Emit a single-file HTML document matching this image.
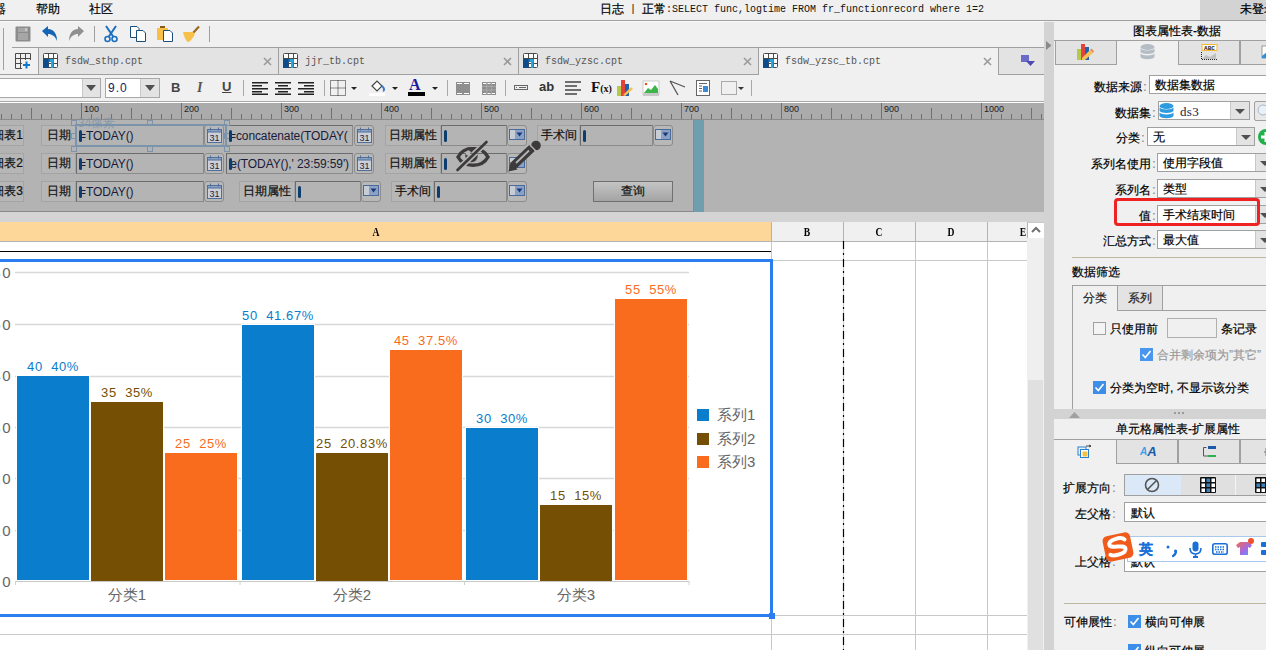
<!DOCTYPE html>
<html><head><meta charset="utf-8">
<style>
*{box-sizing:border-box;margin:0;padding:0}
html,body{width:1266px;height:650px;overflow:hidden;background:#f0f0f0;position:relative;font-family:"Liberation Sans",sans-serif;font-size:12px;color:#000}
.a{position:absolute}
.m{font-family:"Liberation Mono",monospace;font-size:10px}
.hl{position:absolute;height:1px}
.vl{position:absolute;width:1px}
.t12{font-size:12px;line-height:12px;white-space:nowrap}
svg{position:absolute;overflow:visible}
.k{-webkit-text-stroke:0.2px currentColor}
.k .m{-webkit-text-stroke:0}
</style></head><body>
<div class="k a t12" style="left:-6px;top:3px">器</div>
<div class="k a t12" style="left:36px;top:3px">帮助</div>
<div class="k a t12" style="left:89px;top:3px">社区</div>
<div class="k a t12" style="left:600px;top:3px;white-space:pre">日志<span class="m" style="font-size:10px;vertical-align:1px"> | </span>正常<span class="m" style="font-size:10px;vertical-align:1px;color:#111">:SELECT func,logtime FROM fr_functionrecord where 1=2</span></div>
<div class="a" style="left:1200px;top:0;width:66px;height:20px;background:#d3d3d3"></div>
<div class="k a t12" style="left:1240px;top:3px">未登录</div>
<div class="hl" style="left:0;top:20px;width:1266px;background:#a0a0a0"></div>
<div class="hl" style="left:0;top:21px;width:1044px;background:#fbfbfb"></div>
<div class="vl" style="left:3px;top:28px;height:42px;background:#a0a0a0"></div>
<!-- save -->
<svg style="left:15px;top:26px" width="16" height="16"><rect x="0.5" y="0.5" width="15" height="15" rx="1" fill="#8c8c8c"/><rect x="3" y="2" width="10" height="4" fill="#a6a6a6"/><rect x="10" y="2" width="2" height="3" fill="#c8c8c8"/><rect x="3" y="7" width="10" height="7" fill="#a6a6a6"/></svg>
<!-- undo -->
<svg style="left:42px;top:26px" width="16" height="16"><path d="M0 5 L6 0 L6 3 C12 3 15 8 15 15 C13 10 10 8 6 8 L6 11 Z" fill="#1565b5"/></svg>
<!-- redo -->
<svg style="left:69px;top:26px" width="16" height="16"><path d="M15 5 L9 0 L9 3 C3 3 0 8 0 15 C2 10 5 8 9 8 L9 11 Z" fill="#909090"/></svg>
<div class="vl" style="left:94px;top:26px;height:16px;background:#a0a0a0"></div>
<!-- cut -->
<svg style="left:104px;top:26px" width="15" height="16"><path d="M2 0 L9.5 11 M12 0 L4.5 11" stroke="#1a6fc0" stroke-width="2" fill="none"/><circle cx="3.5" cy="13" r="2.5" stroke="#1a6fc0" stroke-width="1.6" fill="none"/><circle cx="10.5" cy="13" r="2.5" stroke="#1a6fc0" stroke-width="1.6" fill="none"/></svg>
<!-- copy -->
<svg style="left:130px;top:26px" width="17" height="16"><path d="M0.5 0.5 H7 L9 2.5 V11.5 H0.5 Z" fill="#fff" stroke="#1b4f7a"/><path d="M6.5 4.5 H13 L15.5 7 V15.5 H6.5 Z" fill="#fff" stroke="#1b4f7a"/></svg>
<!-- paste -->
<svg style="left:157px;top:26px" width="17" height="16"><rect x="0" y="2" width="11" height="12" fill="#f7c04a"/><rect x="3" y="0" width="5" height="2" fill="#8a5a1a"/><path d="M6.5 4.5 H13 L15.5 7 V15.5 H6.5 Z" fill="#fff" stroke="#1b4f7a"/></svg>
<!-- brush -->
<svg style="left:183px;top:26px" width="17" height="16"><path d="M16 0.5 L10 7" stroke="#9a6a20" stroke-width="2.2"/><path d="M10 6 L12 8 C10 12 7 16 5 16 C3 15 1 11 0 6 C4 6 7 6 10 6 Z" fill="#f7c04a"/></svg>
<div class="vl" style="left:209px;top:26px;height:16px;background:#a0a0a0"></div>
<div class="hl" style="left:0;top:74px;width:38px;background:#a0a0a0"></div>
<div class="hl" style="left:12px;top:47px;width:1032px;background:#a0a0a0"></div>
<svg style="left:15px;top:53px" width="16" height="16"><path d="M0.5 0.5H15.5V7M0.5 0.5V15.5H7M5.5 0.5V15.5M10.5 0.5V7M0.5 5.5H15.5M0.5 10.5H7" stroke="#4a4a4a" fill="none"/><path d="M8 12H15M11.5 8.5V15.5" stroke="#0a78d0" stroke-width="2"/></svg>
<div class="vl" style="left:38px;top:47px;height:28px;background:#a0a0a0"></div>
<div class="a" style="left:39px;top:48px;width:239px;height:26px;background:#e3e3e3"></div>
<div class="hl" style="left:38px;top:74px;width:241px;background:#a0a0a0"></div>
<div class="vl" style="left:278px;top:47px;height:28px;background:#a0a0a0"></div>
<svg style="left:43px;top:53px" width="15" height="15"><rect x="0.5" y="0.5" width="14" height="14" rx="1" fill="#fff" stroke="#4a4a4a"/><path d="M5.5 0.5V14.5M10.5 0.5V14.5M0.5 5.5H14.5M0.5 10.5H14.5" stroke="#4a4a4a"/><rect x="0" y="6" width="5.5" height="9" fill="#0b4c8c"/><rect x="5.5" y="6" width="5" height="3" fill="#2aa5de"/><rect x="8" y="6" width="2.5" height="9" fill="#2aa5de"/><rect x="5.5" y="6" width="1" height="3" fill="#0b4c8c"/></svg>
<div class="a m" style="left:65px;top:56px;font-size:10px;line-height:12px;color:#555">fsdw_sthp.cpt</div>
<svg style="left:263px;top:57px" width="9" height="9"><path d="M1 1L8 8M8 1L1 8" stroke="#9a9a9a" stroke-width="1.6"/></svg>
<div class="a" style="left:279px;top:48px;width:239px;height:26px;background:#e3e3e3"></div>
<div class="hl" style="left:278px;top:74px;width:241px;background:#a0a0a0"></div>
<div class="vl" style="left:518px;top:47px;height:28px;background:#a0a0a0"></div>
<svg style="left:283px;top:53px" width="15" height="15"><rect x="0.5" y="0.5" width="14" height="14" rx="1" fill="#fff" stroke="#4a4a4a"/><path d="M5.5 0.5V14.5M10.5 0.5V14.5M0.5 5.5H14.5M0.5 10.5H14.5" stroke="#4a4a4a"/><rect x="0" y="6" width="5.5" height="9" fill="#0b4c8c"/><rect x="5.5" y="6" width="5" height="3" fill="#2aa5de"/><rect x="8" y="6" width="2.5" height="9" fill="#2aa5de"/><rect x="5.5" y="6" width="1" height="3" fill="#0b4c8c"/></svg>
<div class="a m" style="left:305px;top:56px;font-size:10px;line-height:12px;color:#555">jjr_tb.cpt</div>
<svg style="left:503px;top:57px" width="9" height="9"><path d="M1 1L8 8M8 1L1 8" stroke="#9a9a9a" stroke-width="1.6"/></svg>
<div class="a" style="left:519px;top:48px;width:239px;height:26px;background:#e3e3e3"></div>
<div class="hl" style="left:518px;top:74px;width:241px;background:#a0a0a0"></div>
<div class="vl" style="left:758px;top:47px;height:28px;background:#a0a0a0"></div>
<svg style="left:523px;top:53px" width="15" height="15"><rect x="0.5" y="0.5" width="14" height="14" rx="1" fill="#fff" stroke="#4a4a4a"/><path d="M5.5 0.5V14.5M10.5 0.5V14.5M0.5 5.5H14.5M0.5 10.5H14.5" stroke="#4a4a4a"/><rect x="0" y="6" width="5.5" height="9" fill="#0b4c8c"/><rect x="5.5" y="6" width="5" height="3" fill="#2aa5de"/><rect x="8" y="6" width="2.5" height="9" fill="#2aa5de"/><rect x="5.5" y="6" width="1" height="3" fill="#0b4c8c"/></svg>
<div class="a m" style="left:545px;top:56px;font-size:10px;line-height:12px;color:#555">fsdw_yzsc.cpt</div>
<svg style="left:743px;top:57px" width="9" height="9"><path d="M1 1L8 8M8 1L1 8" stroke="#9a9a9a" stroke-width="1.6"/></svg>
<div class="a" style="left:759px;top:48px;width:239px;height:26px;background:#f0f0f0"></div>
<div class="vl" style="left:998px;top:47px;height:28px;background:#a0a0a0"></div>
<svg style="left:763px;top:53px" width="15" height="15"><rect x="0.5" y="0.5" width="14" height="14" rx="1" fill="#fff" stroke="#4a4a4a"/><path d="M5.5 0.5V14.5M10.5 0.5V14.5M0.5 5.5H14.5M0.5 10.5H14.5" stroke="#4a4a4a"/><rect x="0" y="6" width="5.5" height="9" fill="#0b4c8c"/><rect x="5.5" y="6" width="5" height="3" fill="#2aa5de"/><rect x="8" y="6" width="2.5" height="9" fill="#2aa5de"/><rect x="5.5" y="6" width="1" height="3" fill="#0b4c8c"/></svg>
<div class="a m" style="left:785px;top:56px;font-size:10px;line-height:12px;color:#555">fsdw_yzsc_tb.cpt</div>
<svg style="left:983px;top:57px" width="9" height="9"><path d="M1 1L8 8M8 1L1 8" stroke="#9a9a9a" stroke-width="1.6"/></svg>
<div class="a" style="left:999px;top:48px;width:45px;height:26px;background:#e3e3e3"></div>
<div class="hl" style="left:998px;top:74px;width:46px;background:#a0a0a0"></div>
<svg style="left:1021px;top:55px" width="14" height="12"><rect x="0" y="0" width="8" height="7" fill="#6a6ac8"/><path d="M5 6H14L9.5 11Z" fill="#4a4ab0"/></svg><!-- font combo -->
<div class="a" style="left:-1px;top:78px;width:102px;height:20px;background:#fff;border:1px solid #a8a8a8"></div>
<div class="a" style="left:82px;top:79px;width:18px;height:18px;background:#e3e3e3;border-left:1px solid #c8c8c8"></div>
<svg style="left:86px;top:85px" width="10" height="6"><path d="M0 0H10L5 6Z" fill="#505050"/></svg>
<div class="a" style="left:105px;top:78px;width:55px;height:20px;background:#fff;border:1px solid #a8a8a8"></div>
<div class="a" style="left:140px;top:79px;width:19px;height:18px;background:#e3e3e3;border-left:1px solid #c8c8c8"></div>
<svg style="left:145px;top:85px" width="10" height="6"><path d="M0 0H10L5 6Z" fill="#505050"/></svg>
<div class="a" style="left:108px;top:82px;font-size:12px;line-height:12px;color:#1a1a60;letter-spacing:1px">9.0</div>
<!-- B I U -->
<div class="a" style="left:171px;top:81px;font-size:13px;line-height:14px;font-weight:bold;color:#444">B</div>
<div class="a" style="left:197px;top:81px;font-size:14px;line-height:14px;font-style:italic;font-weight:bold;color:#555;font-family:'Liberation Serif',serif">I</div>
<div class="a" style="left:222px;top:80px;font-size:13px;line-height:14px;font-weight:bold;text-decoration:underline;color:#444">U</div>
<div class="vl" style="left:243px;top:80px;height:16px;background:#a8a8a8"></div>
<svg style="left:252px;top:82px" width="17" height="13"><path d="M0 0.75H16M0 3.75H10M0 6.75H16M0 9.75H10M0 12.25H16" stroke="#222" stroke-width="1.3"/></svg>
<svg style="left:275px;top:82px" width="17" height="13"><path d="M0 0.75H16M3 3.75H13M0 6.75H16M3 9.75H13M0 12.25H16" stroke="#222" stroke-width="1.3"/></svg>
<svg style="left:298px;top:82px" width="17" height="13"><path d="M0 0.75H16M6 3.75H16M0 6.75H16M6 9.75H16M0 12.25H16" stroke="#222" stroke-width="1.3"/></svg>
<div class="vl" style="left:324px;top:80px;height:16px;background:#a8a8a8"></div>
<svg style="left:330px;top:80px" width="16" height="16"><rect x="0.5" y="0.5" width="15" height="15" fill="none" stroke="#222" stroke-dasharray="1 1"/><path d="M8 0.5V15.5M0.5 8H15.5" stroke="#222" stroke-dasharray="1 1"/></svg>
<svg style="left:351px;top:87px" width="6" height="3"><path d="M0 0H6L3 3Z" fill="#222"/></svg>
<svg style="left:369px;top:80px" width="17" height="16"><path d="M3 6L8 1L13 6L8 11Z" fill="#fff" stroke="#444" stroke-width="1.2"/><path d="M13 6C15 8 16 10 14 11" stroke="#3a7ac8" stroke-width="2" fill="none"/><rect x="0" y="13" width="16" height="3" fill="#fff"/></svg>
<svg style="left:392px;top:87px" width="6" height="3"><path d="M0 0H6L3 3Z" fill="#222"/></svg>
<div class="a" style="left:409px;top:77px;font-family:'Liberation Serif',serif;font-size:16px;line-height:16px;font-weight:bold;color:#1a1a9a">A</div>
<div class="a" style="left:408px;top:92px;width:17px;height:4px;background:#000"></div>
<svg style="left:432px;top:87px" width="6" height="3"><path d="M0 0H6L3 3Z" fill="#222"/></svg>
<div class="vl" style="left:447px;top:80px;height:16px;background:#a8a8a8"></div>
<!-- merge -->
<svg style="left:456px;top:82px" width="14" height="13"><rect x="0" y="0" width="14" height="13" fill="#8e8e8e"/><path d="M1 1.5H6M8 1.5H13M1 11.5H6M8 11.5H13" stroke="#fff" stroke-width="1"/></svg>
<svg style="left:482px;top:82px" width="14" height="13"><rect x="0" y="0" width="14" height="13" fill="#8e8e8e"/><path d="M1 1.5H4M5.5 1.5H8.5M10 1.5H13M1 11.5H4M5.5 11.5H8.5M10 11.5H13" stroke="#fff"/><path d="M0 4.5H14M0 8H14M4.7 0V13M9.3 0V13" stroke="#a8a8a8"/></svg>
<div class="vl" style="left:505px;top:80px;height:16px;background:#a8a8a8"></div>
<svg style="left:514px;top:85px" width="14" height="5"><rect x="0.5" y="0.5" width="13" height="4" fill="none" stroke="#666"/><rect x="5" y="2" width="7" height="1" fill="#666"/><rect x="2" y="2" width="1" height="1" fill="#666"/></svg>
<div class="a" style="left:539px;top:80px;font-size:13px;line-height:13px;font-weight:bold;color:#333">ab</div>
<svg style="left:565px;top:81px" width="17" height="15"><path d="M0 1H16M0 5H12M0 9H16M0 13H12" stroke="#444" stroke-width="1.6"/></svg>
<div class="a" style="left:591px;top:80px;font-family:'Liberation Serif',serif;font-size:15px;line-height:15px;font-weight:bold;color:#111">F<span style="font-size:10px">(x)</span></div>
<!-- chart icon -->
<svg style="left:617px;top:80px" width="17" height="16"><rect x="0" y="6" width="4" height="10" fill="#b5c94a"/><rect x="4" y="0" width="4" height="16" fill="#e5433a"/><rect x="8" y="4" width="4" height="12" fill="#1a64b0"/><path d="M6 15L14 7L16 9L8 16Z" fill="#f5c25a"/></svg>
<svg style="left:643px;top:81px" width="16" height="15"><rect x="0" y="0" width="16" height="13" fill="#fff" stroke="#ccc"/><path d="M1 12L5 7L8 9L12 4L15 8V12Z" fill="#3cb54a"/><rect x="0" y="12" width="16" height="3" fill="#c8c8c8"/><circle cx="3" cy="3" r="1.3" fill="#e8552a"/></svg>
<svg style="left:669px;top:80px" width="17" height="16"><path d="M1 1L16 7M1 1L9 15" stroke="#555" stroke-width="1.3" fill="none"/></svg>
<svg style="left:696px;top:80px" width="14" height="16"><rect x="0.5" y="0.5" width="13" height="15" fill="#fff" stroke="#666"/><path d="M3 3.5H11M3 6H6M3 8.5H6M3 11H6" stroke="#666"/><rect x="7" y="6" width="5" height="6" fill="#3a8ad8"/></svg>
<svg style="left:720px;top:80px" width="18" height="16"><rect x="1.5" y="1.5" width="15" height="13" fill="none" stroke="#aaa"/></svg>
<svg style="left:738px;top:87px" width="6" height="3"><path d="M0 0H6L3 3Z" fill="#333"/></svg>
<div class="vl" style="left:751px;top:80px;height:16px;background:#a8a8a8"></div>
<div class="hl" style="left:0;top:101px;width:1044px;background:#a8a8a8"></div>
<div class="hl" style="left:0;top:102px;width:1044px;background:#fff"></div>
<div class="a" style="left:0;top:103px;width:1044px;height:17px;background:#ababab"></div>
<div class="hl" style="left:0;top:119px;width:1044px;background:#8a8a8a"></div>
<svg style="left:0;top:0" width="1044" height="120"><path d="M1.5 114V119M11.5 114V119M21.5 114V119M31.5 108V119M41.5 114V119M51.5 114V119M61.5 114V119M71.5 114V119M81.5 103V119M91.5 114V119M101.5 114V119M111.5 114V119M121.5 114V119M131.5 108V119M141.5 114V119M151.5 114V119M161.5 114V119M171.5 114V119M181.5 103V119M191.5 114V119M201.5 114V119M211.5 114V119M221.5 114V119M231.5 108V119M241.5 114V119M251.5 114V119M261.5 114V119M271.5 114V119M281.5 103V119M291.5 114V119M301.5 114V119M311.5 114V119M321.5 114V119M331.5 108V119M341.5 114V119M351.5 114V119M361.5 114V119M371.5 114V119M381.5 103V119M391.5 114V119M401.5 114V119M411.5 114V119M421.5 114V119M431.5 108V119M441.5 114V119M451.5 114V119M461.5 114V119M471.5 114V119M481.5 103V119M491.5 114V119M501.5 114V119M511.5 114V119M521.5 114V119M531.5 108V119M541.5 114V119M551.5 114V119M561.5 114V119M571.5 114V119M581.5 103V119M591.5 114V119M601.5 114V119M611.5 114V119M621.5 114V119M631.5 108V119M641.5 114V119M651.5 114V119M661.5 114V119M671.5 114V119M681.5 103V119M691.5 114V119M701.5 114V119M711.5 114V119M721.5 114V119M731.5 108V119M741.5 114V119M751.5 114V119M761.5 114V119M771.5 114V119M781.5 103V119M791.5 114V119M801.5 114V119M811.5 114V119M821.5 114V119M831.5 108V119M841.5 114V119M851.5 114V119M861.5 114V119M871.5 114V119M881.5 103V119M891.5 114V119M901.5 114V119M911.5 114V119M921.5 114V119M931.5 108V119M941.5 114V119M951.5 114V119M961.5 114V119M971.5 114V119M981.5 103V119M991.5 114V119M1001.5 114V119M1011.5 114V119M1021.5 114V119M1031.5 108V119M1041.5 114V119" stroke="#707070" stroke-width="1"/></svg>
<div class="a" style="left:84px;top:105px;font-size:9px;line-height:9px;color:#222">100</div>
<div class="a" style="left:184px;top:105px;font-size:9px;line-height:9px;color:#222">200</div>
<div class="a" style="left:284px;top:105px;font-size:9px;line-height:9px;color:#222">300</div>
<div class="a" style="left:384px;top:105px;font-size:9px;line-height:9px;color:#222">400</div>
<div class="a" style="left:484px;top:105px;font-size:9px;line-height:9px;color:#222">500</div>
<div class="a" style="left:584px;top:105px;font-size:9px;line-height:9px;color:#222">600</div>
<div class="a" style="left:684px;top:105px;font-size:9px;line-height:9px;color:#222">700</div>
<div class="a" style="left:784px;top:105px;font-size:9px;line-height:9px;color:#222">800</div>
<div class="a" style="left:884px;top:105px;font-size:9px;line-height:9px;color:#222">900</div>
<div class="a" style="left:984px;top:105px;font-size:9px;line-height:9px;color:#222">1000</div><div class="a" style="left:0;top:120px;width:1044px;height:92px;background:#b3b3b3"></div>
<div class="a" style="left:0;top:212px;width:1054px;height:10px;background:#d4d4d4"></div>
<div class="k a" style="left:-12px;top:125px;width:36px;height:21px;border:1px solid #a4a4a4;background:#b6b6b6;font-size:12px;line-height:18px;text-align:right;white-space:nowrap;overflow:hidden;color:#111">细表1</div>
<div class="k a" style="left:41px;top:125px;width:35px;height:21px;border:1px solid #a4a4a4;background:#b6b6b6;font-size:12px;line-height:18px;text-align:center;white-space:nowrap;overflow:hidden;color:#111">日期</div>
<div class="a" style="left:76px;top:125px;width:128px;height:21px;border:1px solid #6c6c6c;border-right-color:#8a8a8a;border-bottom-color:#8a8a8a;background:#b4b4b4"></div><div class="a" style="left:79px;top:130px;width:3px;height:12px;background:#0d3d6e;border-radius:1.5px;z-index:2"></div><div class="a" style="left:79px;top:127px;width:123px;height:18px;font-size:12px;line-height:18px;white-space:nowrap;overflow:hidden;color:#1a1a3a;letter-spacing:-0.1px">=TODAY()</div>
<div class="a" style="left:204px;top:125px;width:20px;height:21px;border:1px solid #8c8c8c;border-radius:3px;background:#b8b8b8"></div><svg style="left:207px;top:127px" width="15" height="16"><rect x="0.5" y="2.5" width="14" height="13" fill="#cdd0d6" stroke="#4f6e9a"/><rect x="0.5" y="2.5" width="14" height="2.5" fill="#8ca2c2" stroke="#4f6e9a"/><path d="M3.5 0.5V3.5M11.5 0.5V3.5" stroke="#4f6e9a"/><text x="7.5" y="14" font-size="9" font-family="Liberation Sans" text-anchor="middle" fill="#1a2440">31</text></svg>
<div class="k a" style="left:-12px;top:153px;width:36px;height:21px;border:1px solid #a4a4a4;background:#b6b6b6;font-size:12px;line-height:18px;text-align:right;white-space:nowrap;overflow:hidden;color:#111">细表2</div>
<div class="k a" style="left:41px;top:153px;width:35px;height:21px;border:1px solid #a4a4a4;background:#b6b6b6;font-size:12px;line-height:18px;text-align:center;white-space:nowrap;overflow:hidden;color:#111">日期</div>
<div class="a" style="left:76px;top:153px;width:128px;height:21px;border:1px solid #6c6c6c;border-right-color:#8a8a8a;border-bottom-color:#8a8a8a;background:#b4b4b4"></div><div class="a" style="left:79px;top:158px;width:3px;height:12px;background:#0d3d6e;border-radius:1.5px;z-index:2"></div><div class="a" style="left:79px;top:155px;width:123px;height:18px;font-size:12px;line-height:18px;white-space:nowrap;overflow:hidden;color:#1a1a3a;letter-spacing:-0.1px">=TODAY()</div>
<div class="a" style="left:204px;top:153px;width:20px;height:21px;border:1px solid #8c8c8c;border-radius:3px;background:#b8b8b8"></div><svg style="left:207px;top:155px" width="15" height="16"><rect x="0.5" y="2.5" width="14" height="13" fill="#cdd0d6" stroke="#4f6e9a"/><rect x="0.5" y="2.5" width="14" height="2.5" fill="#8ca2c2" stroke="#4f6e9a"/><path d="M3.5 0.5V3.5M11.5 0.5V3.5" stroke="#4f6e9a"/><text x="7.5" y="14" font-size="9" font-family="Liberation Sans" text-anchor="middle" fill="#1a2440">31</text></svg>
<div class="k a" style="left:-12px;top:181px;width:36px;height:21px;border:1px solid #a4a4a4;background:#b6b6b6;font-size:12px;line-height:18px;text-align:right;white-space:nowrap;overflow:hidden;color:#111">细表3</div>
<div class="k a" style="left:41px;top:181px;width:35px;height:21px;border:1px solid #a4a4a4;background:#b6b6b6;font-size:12px;line-height:18px;text-align:center;white-space:nowrap;overflow:hidden;color:#111">日期</div>
<div class="a" style="left:76px;top:181px;width:128px;height:21px;border:1px solid #6c6c6c;border-right-color:#8a8a8a;border-bottom-color:#8a8a8a;background:#b4b4b4"></div><div class="a" style="left:79px;top:186px;width:3px;height:12px;background:#0d3d6e;border-radius:1.5px;z-index:2"></div><div class="a" style="left:79px;top:183px;width:123px;height:18px;font-size:12px;line-height:18px;white-space:nowrap;overflow:hidden;color:#1a1a3a;letter-spacing:-0.1px">=TODAY()</div>
<div class="a" style="left:204px;top:181px;width:20px;height:21px;border:1px solid #8c8c8c;border-radius:3px;background:#b8b8b8"></div><svg style="left:207px;top:183px" width="15" height="16"><rect x="0.5" y="2.5" width="14" height="13" fill="#cdd0d6" stroke="#4f6e9a"/><rect x="0.5" y="2.5" width="14" height="2.5" fill="#8ca2c2" stroke="#4f6e9a"/><path d="M3.5 0.5V3.5M11.5 0.5V3.5" stroke="#4f6e9a"/><text x="7.5" y="14" font-size="9" font-family="Liberation Sans" text-anchor="middle" fill="#1a2440">31</text></svg>
<div class="a" style="left:226px;top:125px;width:127px;height:21px;border:1px solid #6c6c6c;border-right-color:#8a8a8a;border-bottom-color:#8a8a8a;background:#b4b4b4"></div><div class="a" style="left:229px;top:130px;width:3px;height:12px;background:#0d3d6e;border-radius:1.5px;z-index:2"></div><div class="a" style="left:229px;top:127px;width:122px;height:18px;font-size:12px;line-height:18px;white-space:nowrap;overflow:hidden;color:#1a1a3a;letter-spacing:-0.1px">=concatenate(TODAY(</div>
<div class="a" style="left:354px;top:125px;width:20px;height:21px;border:1px solid #8c8c8c;border-radius:3px;background:#b8b8b8"></div><svg style="left:357px;top:127px" width="15" height="16"><rect x="0.5" y="2.5" width="14" height="13" fill="#cdd0d6" stroke="#4f6e9a"/><rect x="0.5" y="2.5" width="14" height="2.5" fill="#8ca2c2" stroke="#4f6e9a"/><path d="M3.5 0.5V3.5M11.5 0.5V3.5" stroke="#4f6e9a"/><text x="7.5" y="14" font-size="9" font-family="Liberation Sans" text-anchor="middle" fill="#1a2440">31</text></svg>
<div class="k a" style="left:385px;top:125px;width:56px;height:21px;border:1px solid #a4a4a4;background:#b6b6b6;font-size:12px;line-height:18px;text-align:center;white-space:nowrap;overflow:hidden;color:#111">日期属性</div>
<div class="a" style="left:441px;top:125px;width:66px;height:21px;border:1px solid #6c6c6c;border-right-color:#8a8a8a;border-bottom-color:#8a8a8a;background:#b4b4b4"></div><div class="a" style="left:444px;top:130px;width:3px;height:12px;background:#0d3d6e;border-radius:1.5px;z-index:2"></div>
<div class="a" style="left:507px;top:125px;width:20px;height:21px;border:1px solid #8c8c8c;border-radius:3px;background:#b8b8b8"></div><svg style="left:509px;top:129px" width="16" height="11"><rect x="0.5" y="0.5" width="15" height="10" fill="#c8ccd4" stroke="#4a6a9a"/><rect x="6" y="1" width="9" height="9" fill="#8aa0c4"/><path d="M7.5 3.5H13.5L10.5 7.5Z" fill="#1a3a7a"/></svg>
<div class="k a" style="left:537px;top:125px;width:43px;height:21px;border:1px solid #a4a4a4;background:#b6b6b6;font-size:12px;line-height:18px;text-align:center;white-space:nowrap;overflow:hidden;color:#111">手术间</div>
<div class="a" style="left:580px;top:125px;width:73px;height:21px;border:1px solid #6c6c6c;border-right-color:#8a8a8a;border-bottom-color:#8a8a8a;background:#b4b4b4"></div><div class="a" style="left:583px;top:130px;width:3px;height:12px;background:#0d3d6e;border-radius:1.5px;z-index:2"></div>
<div class="a" style="left:653px;top:125px;width:20px;height:21px;border:1px solid #8c8c8c;border-radius:3px;background:#b8b8b8"></div><svg style="left:655px;top:129px" width="16" height="11"><rect x="0.5" y="0.5" width="15" height="10" fill="#c8ccd4" stroke="#4a6a9a"/><rect x="6" y="1" width="9" height="9" fill="#8aa0c4"/><path d="M7.5 3.5H13.5L10.5 7.5Z" fill="#1a3a7a"/></svg>
<div class="a" style="left:226px;top:153px;width:127px;height:21px;border:1px solid #6c6c6c;border-right-color:#8a8a8a;border-bottom-color:#8a8a8a;background:#b4b4b4"></div><div class="a" style="left:229px;top:158px;width:3px;height:12px;background:#0d3d6e;border-radius:1.5px;z-index:2"></div><div class="a" style="left:229px;top:155px;width:120px;height:18px;font-size:12px;line-height:18px;white-space:nowrap;overflow:hidden;color:#1a1a3a;letter-spacing:-0.1px;direction:rtl;text-align:right"><span style="direction:ltr;unicode-bidi:bidi-override">te(TODAY(),' 23:59:59')</span></div>
<div class="a" style="left:354px;top:153px;width:20px;height:21px;border:1px solid #8c8c8c;border-radius:3px;background:#b8b8b8"></div><svg style="left:357px;top:155px" width="15" height="16"><rect x="0.5" y="2.5" width="14" height="13" fill="#cdd0d6" stroke="#4f6e9a"/><rect x="0.5" y="2.5" width="14" height="2.5" fill="#8ca2c2" stroke="#4f6e9a"/><path d="M3.5 0.5V3.5M11.5 0.5V3.5" stroke="#4f6e9a"/><text x="7.5" y="14" font-size="9" font-family="Liberation Sans" text-anchor="middle" fill="#1a2440">31</text></svg>
<div class="k a" style="left:385px;top:153px;width:56px;height:21px;border:1px solid #a4a4a4;background:#b6b6b6;font-size:12px;line-height:18px;text-align:center;white-space:nowrap;overflow:hidden;color:#111">日期属性</div>
<div class="a" style="left:441px;top:153px;width:66px;height:21px;border:1px solid #6c6c6c;border-right-color:#8a8a8a;border-bottom-color:#8a8a8a;background:#b4b4b4"></div><div class="a" style="left:444px;top:158px;width:3px;height:12px;background:#0d3d6e;border-radius:1.5px;z-index:2"></div>
<div class="a" style="left:507px;top:153px;width:20px;height:21px;border:1px solid #8c8c8c;border-radius:3px;background:#b8b8b8"></div><svg style="left:509px;top:157px" width="16" height="11"><rect x="0.5" y="0.5" width="15" height="10" fill="#c8ccd4" stroke="#4a6a9a"/><rect x="6" y="1" width="9" height="9" fill="#8aa0c4"/><path d="M7.5 3.5H13.5L10.5 7.5Z" fill="#1a3a7a"/></svg>
<div class="k a" style="left:239px;top:181px;width:56px;height:21px;border:1px solid #a4a4a4;background:#b6b6b6;font-size:12px;line-height:18px;text-align:center;white-space:nowrap;overflow:hidden;color:#111">日期属性</div>
<div class="a" style="left:295px;top:181px;width:66px;height:21px;border:1px solid #6c6c6c;border-right-color:#8a8a8a;border-bottom-color:#8a8a8a;background:#b4b4b4"></div><div class="a" style="left:298px;top:186px;width:3px;height:12px;background:#0d3d6e;border-radius:1.5px;z-index:2"></div>
<div class="a" style="left:361px;top:181px;width:20px;height:21px;border:1px solid #8c8c8c;border-radius:3px;background:#b8b8b8"></div><svg style="left:363px;top:185px" width="16" height="11"><rect x="0.5" y="0.5" width="15" height="10" fill="#c8ccd4" stroke="#4a6a9a"/><rect x="6" y="1" width="9" height="9" fill="#8aa0c4"/><path d="M7.5 3.5H13.5L10.5 7.5Z" fill="#1a3a7a"/></svg>
<div class="k a" style="left:391px;top:181px;width:43px;height:21px;border:1px solid #a4a4a4;background:#b6b6b6;font-size:12px;line-height:18px;text-align:center;white-space:nowrap;overflow:hidden;color:#111">手术间</div>
<div class="a" style="left:434px;top:181px;width:73px;height:21px;border:1px solid #6c6c6c;border-right-color:#8a8a8a;border-bottom-color:#8a8a8a;background:#b4b4b4"></div><div class="a" style="left:437px;top:186px;width:3px;height:12px;background:#0d3d6e;border-radius:1.5px;z-index:2"></div>
<div class="a" style="left:507px;top:181px;width:20px;height:21px;border:1px solid #8c8c8c;border-radius:3px;background:#b8b8b8"></div><svg style="left:509px;top:185px" width="16" height="11"><rect x="0.5" y="0.5" width="15" height="10" fill="#c8ccd4" stroke="#4a6a9a"/><rect x="6" y="1" width="9" height="9" fill="#8aa0c4"/><path d="M7.5 3.5H13.5L10.5 7.5Z" fill="#1a3a7a"/></svg>
<div class="k a" style="left:593px;top:181px;width:80px;height:21px;border:1px solid #707070;background:linear-gradient(#c4c4c4,#a4a4a4);font-size:12px;line-height:19px;text-align:center;color:#111">查询</div>
<div class="a" style="left:694px;top:120px;width:10px;height:92px;background:#6f9fae"></div>
<div class="a" style="left:75px;top:124px;width:152px;height:23px;border:2px solid #7b93ab"></div>
<div class="k a" style="left:78px;top:117px;font-size:12px;line-height:12px;color:#7890a8;opacity:.7;-webkit-text-stroke:0">34像素</div>
<svg style="left:456px;top:141px" width="34" height="31"><defs><mask id="em"><rect x="-5" y="-5" width="50" height="50" fill="#fff"/><path d="M1.5 29L30.5 1" stroke="#000" stroke-width="6"/></mask></defs><g mask="url(#em)"><path d="M2 16C8 4.5 26 4.5 32 16C26 27 8 27 2 16Z" fill="none" stroke="#3c3a3a" stroke-width="3.4"/><circle cx="15.5" cy="15" r="6.2" fill="#3c3a3a"/><circle cx="12.3" cy="12" r="2.6" fill="#b6b6b6"/></g><path d="M1.5 29L30.5 1" stroke="#3c3a3a" stroke-width="2.6" stroke-linecap="round"/></svg>
<svg style="left:508px;top:141px" width="33" height="32"><path d="M5 25L24 7" stroke="#3c3a3a" stroke-width="8"/><path d="M0.5 30.5L2.5 21.5L9.5 28.5Z" fill="#3c3a3a"/><circle cx="28" cy="4.5" r="4.8" fill="#3c3a3a"/><path d="M8 22L21 9.5" stroke="#b4b4b4" stroke-width="1.8"/><path d="M22 4L28.5 10.5" stroke="#b4b4b4" stroke-width="1.2"/></svg>
<div class="vl" style="left:693px;top:120px;height:92px;background:#8a8a8a"></div>
<div class="hl" style="left:0;top:211px;width:694px;background:#8a8a8a"></div>
<div class="vl" style="left:704px;top:120px;height:92px;background:#bab2b2"></div>

<div class="a" style="left:71px;top:120px;width:6px;height:6px;border:1px solid #7b93ab"></div>
<div class="a" style="left:71px;top:146px;width:6px;height:6px;border:1px solid #7b93ab"></div>
<div class="a" style="left:147px;top:120px;width:6px;height:6px;border:1px solid #7b93ab"></div>
<div class="a" style="left:147px;top:146px;width:6px;height:6px;border:1px solid #7b93ab"></div>
<div class="a" style="left:224px;top:120px;width:6px;height:6px;border:1px solid #7b93ab"></div>
<div class="a" style="left:224px;top:146px;width:6px;height:6px;border:1px solid #7b93ab"></div>
<div class="a" style="left:71px;top:133px;width:6px;height:6px;border:1px solid #7b93ab"></div>
<div class="a" style="left:224px;top:133px;width:6px;height:6px;border:1px solid #7b93ab"></div><div class="a" style="left:0;top:222px;width:1027px;height:20px;background:#f0f0f0"></div>
<div class="a" style="left:0;top:222px;width:771px;height:19px;background:#fdd699"></div>
<div class="hl" style="left:0;top:241px;width:1027px;background:#b4b4b4"></div>
<div class="vl" style="left:771px;top:222px;height:19px;background:#b8b39b"></div>
<div class="vl" style="left:843px;top:222px;height:19px;background:#b8b39b"></div>
<div class="vl" style="left:915px;top:222px;height:19px;background:#b8b39b"></div>
<div class="vl" style="left:987px;top:222px;height:19px;background:#b8b39b"></div>
<div class="a" style="left:366px;top:226px;width:20px;text-align:center;font-family:'Liberation Serif',serif;font-weight:bold;font-size:12px;line-height:12px;color:#000;transform:scaleX(0.8)">A</div>
<div class="a" style="left:797px;top:226px;width:20px;text-align:center;font-family:'Liberation Serif',serif;font-weight:bold;font-size:12px;line-height:12px;color:#000;transform:scaleX(0.8)">B</div>
<div class="a" style="left:869px;top:226px;width:20px;text-align:center;font-family:'Liberation Serif',serif;font-weight:bold;font-size:12px;line-height:12px;color:#000;transform:scaleX(0.8)">C</div>
<div class="a" style="left:941px;top:226px;width:20px;text-align:center;font-family:'Liberation Serif',serif;font-weight:bold;font-size:12px;line-height:12px;color:#000;transform:scaleX(0.8)">D</div>
<div class="a" style="left:1013px;top:226px;width:20px;text-align:center;font-family:'Liberation Serif',serif;font-weight:bold;font-size:12px;line-height:12px;color:#000;transform:scaleX(0.8)">E</div>
<div class="a" style="left:0;top:242px;width:1027px;height:408px;background:#fff"></div>
<div class="hl" style="left:0;top:251px;width:771px;background:#000"></div>
<div class="hl" style="left:771px;top:260px;width:256px;background:#c8c8c8"></div>
<div class="hl" style="left:771px;top:615px;width:256px;background:#c8c8c8"></div>
<div class="hl" style="left:0;top:634px;width:1027px;background:#c8c8c8"></div>
<div class="vl" style="left:771px;top:242px;height:18px;background:#c8c8c8"></div>
<div class="vl" style="left:771px;top:615px;height:35px;background:#c8c8c8"></div>
<div class="vl" style="left:915px;top:242px;height:408px;background:#c8c8c8"></div>
<div class="vl" style="left:987px;top:242px;height:408px;background:#c8c8c8"></div>
<div class="vl" style="left:843px;top:242px;height:408px;background:#c8c8c8"></div>
<svg style="left:0;top:0" width="1044" height="650"><path d="M843.5 241V249M843.5 253V255M843.5 259V267M843.5 271V273M843.5 277V285M843.5 289V291M843.5 295V303M843.5 307V309M843.5 313V321M843.5 325V327M843.5 331V339M843.5 343V345M843.5 349V357M843.5 361V363M843.5 367V375M843.5 379V381M843.5 385V393M843.5 397V399M843.5 403V411M843.5 415V417M843.5 421V429M843.5 433V435M843.5 439V447M843.5 451V453M843.5 457V465M843.5 469V471M843.5 475V483M843.5 487V489M843.5 493V501M843.5 505V507M843.5 511V519M843.5 523V525M843.5 529V537M843.5 541V543M843.5 547V555M843.5 559V561M843.5 565V573M843.5 577V579M843.5 583V591M843.5 595V597M843.5 601V609M843.5 613V615M843.5 619V627M843.5 631V633M843.5 637V645M843.5 649V651" stroke="#000" stroke-width="1.2"/></svg>
<div class="a" style="left:1027px;top:222px;width:17px;height:428px;background:#f0f0f0"></div>
<div class="a" style="left:1027px;top:222px;width:17px;height:16px;background:#fff;border-left:1px solid #b4b4b4;border-top:1px solid #c8c8c8"></div>
<svg style="left:1031px;top:226px" width="10" height="7"><path d="M1 6L5 2L9 6" stroke="#707070" stroke-width="2" fill="none"/></svg><svg style="left:0;top:0" width="780" height="650" font-family="Liberation Sans"><path d="M15 530.5H689" stroke="#d8d8d8" stroke-width="1.5"/><path d="M15 478.5H689" stroke="#d8d8d8" stroke-width="1.5"/><path d="M15 427.5H689" stroke="#d8d8d8" stroke-width="1.5"/><path d="M15 376.5H689" stroke="#d8d8d8" stroke-width="1.5"/><path d="M15 324.5H689" stroke="#d8d8d8" stroke-width="1.5"/><path d="M15 272.5H689" stroke="#d8d8d8" stroke-width="1.5"/><path d="M15 581.5H689" stroke="#c8c8c8" stroke-width="1"/><path d="M15.5 581V585M240 581V585M464.5 581V585M689 581V585" stroke="#d0d0d0"/><rect x="16" y="375" width="74" height="206" fill="#fff"/><rect x="17" y="376" width="72" height="204" fill="#0a7dcc"/><text x="53" y="371" text-anchor="middle" font-size="13" letter-spacing="0.6" fill="#0a7dcc" style="white-space:pre">40  40%</text><rect x="90" y="401" width="74" height="180" fill="#fff"/><rect x="91" y="402" width="72" height="179" fill="#754f03"/><text x="127" y="397" text-anchor="middle" font-size="13" letter-spacing="0.6" fill="#754f03" style="white-space:pre">35  35%</text><rect x="164" y="452" width="74" height="129" fill="#fff"/><rect x="165" y="453" width="72" height="127" fill="#f96c1e"/><text x="201" y="448" text-anchor="middle" font-size="13" letter-spacing="0.6" fill="#f96c1e" style="white-space:pre">25  25%</text><rect x="241" y="324" width="74" height="257" fill="#fff"/><rect x="242" y="325" width="72" height="255" fill="#0a7dcc"/><text x="278" y="320" text-anchor="middle" font-size="13" letter-spacing="0.6" fill="#0a7dcc" style="white-space:pre">50  41.67%</text><rect x="315" y="452" width="74" height="129" fill="#fff"/><rect x="316" y="453" width="72" height="128" fill="#754f03"/><text x="352" y="448" text-anchor="middle" font-size="13" letter-spacing="0.6" fill="#754f03" style="white-space:pre">25  20.83%</text><rect x="389" y="349" width="74" height="232" fill="#fff"/><rect x="390" y="350" width="72" height="230" fill="#f96c1e"/><text x="426" y="345" text-anchor="middle" font-size="13" letter-spacing="0.6" fill="#f96c1e" style="white-space:pre">45  37.5%</text><rect x="465" y="427" width="74" height="154" fill="#fff"/><rect x="466" y="428" width="72" height="152" fill="#0a7dcc"/><text x="502" y="423" text-anchor="middle" font-size="13" letter-spacing="0.6" fill="#0a7dcc" style="white-space:pre">30  30%</text><rect x="539" y="504" width="74" height="77" fill="#fff"/><rect x="540" y="505" width="72" height="76" fill="#754f03"/><text x="576" y="500" text-anchor="middle" font-size="13" letter-spacing="0.6" fill="#754f03" style="white-space:pre">15  15%</text><rect x="614" y="298" width="74" height="283" fill="#fff"/><rect x="615" y="299" width="72" height="281" fill="#f96c1e"/><text x="651" y="294" text-anchor="middle" font-size="13" letter-spacing="0.6" fill="#f96c1e" style="white-space:pre">55  55%</text><text x="10.5" y="587.0" text-anchor="end" font-size="15" fill="#666">0</text><text x="10.5" y="535.5" text-anchor="end" font-size="15" fill="#666">0</text><text x="0.5" y="535.5" text-anchor="end" font-size="15" fill="#666">1</text><text x="10.5" y="484.0" text-anchor="end" font-size="15" fill="#666">0</text><text x="0.5" y="484.0" text-anchor="end" font-size="15" fill="#666">2</text><text x="10.5" y="432.5" text-anchor="end" font-size="15" fill="#666">0</text><text x="0.5" y="432.5" text-anchor="end" font-size="15" fill="#666">3</text><text x="10.5" y="381.0" text-anchor="end" font-size="15" fill="#666">0</text><text x="0.5" y="381.0" text-anchor="end" font-size="15" fill="#666">4</text><text x="10.5" y="329.5" text-anchor="end" font-size="15" fill="#666">0</text><text x="0.5" y="329.5" text-anchor="end" font-size="15" fill="#666">5</text><text x="10.5" y="278.0" text-anchor="end" font-size="15" fill="#666">0</text><text x="0.5" y="278.0" text-anchor="end" font-size="15" fill="#666">6</text><text x="127" y="600" text-anchor="middle" font-size="15" fill="#666">分类1</text><text x="352" y="600" text-anchor="middle" font-size="15" fill="#666">分类2</text><text x="576" y="600" text-anchor="middle" font-size="15" fill="#666">分类3</text><rect x="697" y="409" width="12" height="12" fill="#0a7dcc"/><text x="717" y="420" font-size="15" fill="#666">系列1</text><rect x="697" y="433" width="12" height="12" fill="#754f03"/><text x="717" y="444" font-size="15" fill="#666">系列2</text><rect x="697" y="456" width="12" height="12" fill="#f96c1e"/><text x="717" y="467" font-size="15" fill="#666">系列3</text></svg>
<div class="a" style="left:0;top:259px;width:773px;height:3px;background:#2b7ef0"></div>
<div class="a" style="left:770px;top:259px;width:3px;height:357px;background:#2b7ef0"></div>
<div class="a" style="left:0;top:614px;width:773px;height:3px;background:#2b7ef0"></div>
<div class="a" style="left:769px;top:613px;width:6px;height:6px;background:#2b7ef0"></div><div class="a" style="left:1027px;top:238px;width:17px;height:142px;background:#efefef"></div>
<div class="a" style="left:1028px;top:380px;width:15px;height:270px;background:#e0e0e0"></div>
<div class="a" style="left:1044px;top:22px;width:10px;height:628px;background:#d3d3d3"></div>
<svg style="left:1046px;top:41px" width="6" height="9"><path d="M0 0L5.5 4.5L0 9Z" fill="#8a8a8a"/></svg>
<div class="a" style="left:1054px;top:21px;width:212px;height:629px;background:#f0f0f0"></div>
<div class="k a" style="left:1133px;top:25px;font-size:12px;line-height:12px;white-space:nowrap;color:#000;">图表属性表-数据</div>
<div class="hl" style="left:1054px;top:40px;width:212px;background:#a0a0a0"></div>
<div class="a" style="left:1055px;top:41px;width:62px;height:24px;background:#e3e3e3;border-left:1px solid #a0a0a0;border-right:1px solid #a0a0a0;border-bottom:1px solid #a0a0a0"></div>
<div class="a" style="left:1178px;top:41px;width:62px;height:24px;background:#e3e3e3;border-left:1px solid #a0a0a0;border-right:1px solid #a0a0a0;border-bottom:1px solid #a0a0a0"></div>
<div class="a" style="left:1240px;top:41px;width:60px;height:24px;background:#e3e3e3;border-left:1px solid #a0a0a0;border-right:1px solid #a0a0a0;border-bottom:1px solid #a0a0a0"></div>
<svg style="left:1077px;top:44px" width="17" height="16"><rect x="0" y="5" width="4" height="11" fill="#b5c94a"/><rect x="4" y="0" width="4" height="16" fill="#e5433a"/><rect x="8" y="3" width="4" height="13" fill="#1a64b0"/><path d="M5 14L13 6L16 9L8 16L5 16Z" fill="#f5c25a"/><path d="M13 6L14.5 4.5L17 7L16 9Z" fill="#f08a5a"/></svg>
<svg style="left:1140px;top:44px" width="15" height="16"><ellipse cx="7.5" cy="3" rx="7" ry="3" fill="#b4bcc6"/><path d="M0.5 4.5C2 7 13 7 14.5 4.5V8C13 10.5 2 10.5 0.5 8Z" fill="#b4bcc6"/><path d="M0.5 9.5C2 12 13 12 14.5 9.5V13C13 16 2 16 0.5 13Z" fill="#b4bcc6"/></svg>
<svg style="left:1201px;top:44px" width="17" height="16"><rect x="1" y="0.5" width="15" height="6" fill="#fff" stroke="#f5b830"/><text x="8.5" y="6" font-size="6" font-weight="bold" text-anchor="middle" font-family="Liberation Mono" fill="#222">ABC</text><path d="M1 15L5 11L9 13L15 9V15Z" fill="#c0c0c0"/><path d="M0.5 8V15.5H16" stroke="#222" stroke-dasharray="1 1" fill="none"/></svg>
<svg style="left:1261px;top:44px" width="6" height="16"><rect x="1" y="2" width="6" height="12" fill="#fff" stroke="#999"/><path d="M1 12L6 8V14H1Z" fill="#2a90e0"/></svg>
<div class="k a" style="left:948px;top:81px;width:200px;text-align:right;font-size:12px;line-height:12px;white-space:nowrap;color:#000">数据来源<span style="display:inline-block;width:6px;text-align:center;color:#888">:</span></div>
<div class="a" style="left:1149px;top:75px;width:121px;height:19px;background:#fff;border:1px solid #a0a0a0"></div><div class="k a" style="left:1155px;top:79px;font-size:12px;line-height:12px;white-space:nowrap;color:#000;">数据集数据</div>
<div class="k a" style="left:957px;top:107px;width:200px;text-align:right;font-size:12px;line-height:12px;white-space:nowrap;color:#000">数据集<span style="display:inline-block;width:6px;text-align:center;color:#888">:</span></div>
<div class="a" style="left:1158px;top:101px;width:92px;height:19px;background:#fff;border:1px solid #a0a0a0"></div><div class="a" style="left:1230px;top:102px;width:19px;height:17px;background:#e3e3e3;border-left:1px solid #c8c8c8"></div><svg style="left:1235px;top:109px" width="10" height="5"><path d="M0 0H10L5 5Z" fill="#505050"/></svg><div class="a" style="left:1180px;top:105px;font-size:13px;line-height:13px;color:#1a1a44;font-family:'Liberation Serif',serif;letter-spacing:0.3px">ds3</div>
<svg style="left:1159px;top:103px" width="15" height="16"><ellipse cx="7.5" cy="3" rx="7" ry="3" fill="#2c9be0"/><path d="M0.5 4.5C2 7 13 7 14.5 4.5V8C13 10.5 2 10.5 0.5 8Z" fill="#2c9be0"/><path d="M0.5 9.5C2 12 13 12 14.5 9.5V13C13 16 2 16 0.5 13Z" fill="#2c9be0"/></svg>
<div class="a" style="left:1254px;top:101px;width:20px;height:20px;background:#e8e8e8;border:1px solid #a0a0a0;border-radius:2px"></div>
<svg style="left:1257px;top:104px" width="10" height="10"><circle cx="6" cy="6" r="5" fill="#e8f0f8" stroke="#a8b8c8"/></svg>
<div class="k a" style="left:946px;top:132px;width:200px;text-align:right;font-size:12px;line-height:12px;white-space:nowrap;color:#000">分类<span style="display:inline-block;width:6px;text-align:center;color:#888">:</span></div>
<div class="a" style="left:1147px;top:127px;width:108px;height:19px;background:#fff;border:1px solid #a0a0a0"></div><div class="a" style="left:1236px;top:128px;width:18px;height:17px;background:#e3e3e3;border-left:1px solid #c8c8c8"></div><svg style="left:1241px;top:135px" width="10" height="5"><path d="M0 0H10L5 5Z" fill="#505050"/></svg><div class="k a" style="left:1153px;top:131px;font-size:12px;line-height:12px;white-space:nowrap;color:#000;">无</div>
<svg style="left:1257px;top:128px" width="18" height="18"><circle cx="9" cy="9" r="8" fill="#22b04a"/><path d="M4 9H14M9 4V14" stroke="#fff" stroke-width="3"/></svg>
<div class="k a" style="left:957px;top:158px;width:200px;text-align:right;font-size:12px;line-height:12px;white-space:nowrap;color:#000">系列名使用<span style="display:inline-block;width:6px;text-align:center;color:#888">:</span></div>
<div class="a" style="left:1157px;top:153px;width:123px;height:19px;background:#fff;border:1px solid #a0a0a0"></div><div class="a" style="left:1255px;top:154px;width:24px;height:17px;background:#e3e3e3;border-left:1px solid #c8c8c8"></div><svg style="left:1260px;top:161px" width="10" height="5"><path d="M0 0H10L5 5Z" fill="#505050"/></svg><div class="k a" style="left:1163px;top:157px;font-size:12px;line-height:12px;white-space:nowrap;color:#000;">使用字段值</div>
<div class="k a" style="left:957px;top:184px;width:200px;text-align:right;font-size:12px;line-height:12px;white-space:nowrap;color:#000">系列名<span style="display:inline-block;width:6px;text-align:center;color:#888">:</span></div>
<div class="a" style="left:1157px;top:179px;width:123px;height:19px;background:#fff;border:1px solid #a0a0a0"></div><div class="a" style="left:1255px;top:180px;width:24px;height:17px;background:#e3e3e3;border-left:1px solid #c8c8c8"></div><svg style="left:1260px;top:187px" width="10" height="5"><path d="M0 0H10L5 5Z" fill="#505050"/></svg><div class="k a" style="left:1163px;top:183px;font-size:12px;line-height:12px;white-space:nowrap;color:#000;">类型</div>
<div class="k a" style="left:957px;top:210px;width:200px;text-align:right;font-size:12px;line-height:12px;white-space:nowrap;color:#000">值<span style="display:inline-block;width:6px;text-align:center;color:#888">:</span></div>
<div class="a" style="left:1157px;top:205px;width:123px;height:19px;background:#fff;border:1px solid #a0a0a0"></div><div class="a" style="left:1255px;top:206px;width:24px;height:17px;background:#e3e3e3;border-left:1px solid #c8c8c8"></div><svg style="left:1260px;top:213px" width="10" height="5"><path d="M0 0H10L5 5Z" fill="#505050"/></svg><div class="k a" style="left:1163px;top:209px;font-size:12px;line-height:12px;white-space:nowrap;color:#000;">手术结束时间</div>
<div class="k a" style="left:957px;top:235px;width:200px;text-align:right;font-size:12px;line-height:12px;white-space:nowrap;color:#000">汇总方式<span style="display:inline-block;width:6px;text-align:center;color:#888">:</span></div>
<div class="a" style="left:1157px;top:230px;width:123px;height:19px;background:#fff;border:1px solid #a0a0a0"></div><div class="a" style="left:1255px;top:231px;width:24px;height:17px;background:#e3e3e3;border-left:1px solid #c8c8c8"></div><svg style="left:1260px;top:238px" width="10" height="5"><path d="M0 0H10L5 5Z" fill="#505050"/></svg><div class="k a" style="left:1163px;top:234px;font-size:12px;line-height:12px;white-space:nowrap;color:#000;">最大值</div>
<div class="a" style="left:1114px;top:198px;width:146px;height:28px;border:3px solid #ee2222;border-radius:4px"></div>
<div class="hl" style="left:1072px;top:257px;width:194px;background:#bdb7a0"></div>
<div class="k a" style="left:1072px;top:266px;font-size:12px;line-height:12px;white-space:nowrap;color:#000;">数据筛选</div>
<div class="a" style="left:1072px;top:285px;width:200px;height:130px;border:1px solid #a0a0a0;border-right:none;border-bottom:none"></div>
<div class="hl" style="left:1117px;top:310px;width:149px;background:#a0a0a0"></div>
<div class="a" style="left:1117px;top:285px;width:46px;height:26px;background:#e3e3e3;border:1px solid #a0a0a0"></div>
<div class="k a" style="left:1083px;top:292px;font-size:12px;line-height:12px;white-space:nowrap;color:#222;">分类</div>
<div class="k a" style="left:1128px;top:292px;font-size:12px;line-height:12px;white-space:nowrap;color:#222;">系列</div>
<div class="a" style="left:1093px;top:322px;width:13px;height:13px;border:1px solid #a0a0a0;background:#f4f4f4"></div>
<div class="k a" style="left:1110px;top:323px;font-size:12px;line-height:12px;white-space:nowrap;color:#000;">只使用前</div>
<div class="a" style="left:1167px;top:318px;width:50px;height:20px;border:1px solid #b0b0b0;background:#f0f0f0"></div>
<div class="k a" style="left:1221px;top:323px;font-size:12px;line-height:12px;white-space:nowrap;color:#000;">条记录</div>
<svg style="left:1140px;top:348px" width="13" height="13"><rect x="0" y="0" width="13" height="13" fill="#4a96ec"/><path d="M2.5 6.5L5.3 9.5L10.5 3" stroke="#fff" stroke-width="1.6" fill="none"/></svg>
<div class="k a" style="left:1157px;top:349px;font-size:12px;line-height:12px;white-space:nowrap;color:#9a9a9a;">合并剩余项为”其它”</div>
<svg style="left:1093px;top:381px" width="13" height="13"><rect x="0" y="0" width="13" height="13" fill="#3d8ee8"/><path d="M2.5 6.5L5.3 9.5L10.5 3" stroke="#fff" stroke-width="1.6" fill="none"/></svg>
<div class="k a" style="left:1110px;top:382px;font-size:12px;line-height:12px;white-space:nowrap;color:#000;">分类为空时, 不显示该分类</div>
<div class="a" style="left:1054px;top:409px;width:212px;height:10px;background:#d3d3d3"></div>
<svg style="left:1069px;top:412px" width="11" height="6"><path d="M0 6L5.5 0L11 6Z" fill="#a0a0a0"/></svg>
<svg style="left:1174px;top:412px" width="11" height="3"><path d="M0 1H2M4 1H6M8 1H10" stroke="#888" stroke-width="1.5"/></svg>
<div class="k a" style="left:1116px;top:423px;font-size:12px;line-height:12px;white-space:nowrap;color:#000;">单元格属性表-扩展属性</div>
<div class="hl" style="left:1054px;top:439px;width:212px;background:#a0a0a0"></div>
<div class="a" style="left:1116px;top:440px;width:62px;height:24px;background:#e3e3e3;border-left:1px solid #a0a0a0;border-right:1px solid #a0a0a0;border-bottom:1px solid #a0a0a0"></div>
<div class="a" style="left:1178px;top:440px;width:62px;height:24px;background:#e3e3e3;border-left:1px solid #a0a0a0;border-right:1px solid #a0a0a0;border-bottom:1px solid #a0a0a0"></div>
<div class="a" style="left:1240px;top:440px;width:60px;height:24px;background:#e3e3e3;border-left:1px solid #a0a0a0;border-right:1px solid #a0a0a0;border-bottom:1px solid #a0a0a0"></div>
<svg style="left:1077px;top:445px" width="16" height="13"><rect x="1" y="2" width="8" height="8" fill="none" stroke="#2a80d0"/><rect x="3.5" y="4.5" width="8" height="8" fill="#fff" stroke="#2a80d0"/><rect x="5.5" y="6.5" width="5" height="5" fill="#f5c040"/><path d="M9 1H14M12 0L14 1L12 2" stroke="#444" fill="none"/></svg>
<div class="a" style="left:1140px;top:445px;font-size:13px;line-height:13px;font-weight:bold;font-style:italic;color:#1a5aa8"><span style="color:#3aa0e8;font-size:10px;vertical-align:top">A</span>A</div>
<svg style="left:1202px;top:446px" width="15" height="12"><rect x="6" y="0" width="8" height="3" fill="#1a5aa8"/><rect x="6" y="9" width="8" height="2" fill="#2ab050"/><path d="M4.5 1.5H1.5V10H6" stroke="#555" fill="none"/></svg>
<svg style="left:1262px;top:446px" width="6" height="12"><path d="M2 6H6M4 2V10" stroke="#999" stroke-width="1.5"/></svg>
<div class="k a" style="left:917px;top:482px;width:200px;text-align:right;font-size:12px;line-height:12px;white-space:nowrap;color:#000">扩展方向<span style="display:inline-block;width:6px;text-align:center;color:#888">:</span></div>
<div class="a" style="left:1124px;top:474px;width:150px;height:22px;border:1px solid #a0a0a0;background:#e0e0e0"></div>
<div class="a" style="left:1125px;top:475px;width:56px;height:20px;background:#dae8f8"></div>
<div class="vl" style="left:1235px;top:475px;height:20px;background:#f4f4f4"></div>
<svg style="left:1144px;top:477px" width="16" height="16"><circle cx="8" cy="8" r="6.5" fill="none" stroke="#555" stroke-width="1.6"/><path d="M3.5 12.5L12.5 3.5" stroke="#555" stroke-width="1.6"/></svg>
<svg style="left:1200px;top:477px" width="16" height="16"><rect x="0" y="0" width="16" height="16" rx="1" fill="#111"/><rect x="1.5" y="1.5" width="3.5" height="3.5" fill="#fff"/><rect x="6.5" y="1.5" width="3.5" height="3.5" fill="#3a82bc"/><rect x="11.5" y="1.5" width="3.5" height="3.5" fill="#fff"/><rect x="1.5" y="6.5" width="3.5" height="3.5" fill="#fff"/><rect x="6.5" y="6.5" width="3.5" height="3.5" fill="#3a82bc"/><rect x="11.5" y="6.5" width="3.5" height="3.5" fill="#fff"/><rect x="1.5" y="11.5" width="3.5" height="3.5" fill="#fff"/><rect x="6.5" y="11.5" width="3.5" height="3.5" fill="#3a82bc"/><rect x="11.5" y="11.5" width="3.5" height="3.5" fill="#fff"/></svg>
<svg style="left:1255px;top:477px" width="16" height="16"><rect x="0" y="0" width="16" height="16" rx="1" fill="#111"/><rect x="1.5" y="1.5" width="3.5" height="3.5" fill="#fff"/><rect x="6.5" y="1.5" width="3.5" height="3.5" fill="#fff"/><rect x="11.5" y="1.5" width="3.5" height="3.5" fill="#fff"/><rect x="1.5" y="6.5" width="3.5" height="3.5" fill="#3a82bc"/><rect x="6.5" y="6.5" width="3.5" height="3.5" fill="#3a82bc"/><rect x="11.5" y="6.5" width="3.5" height="3.5" fill="#3a82bc"/><rect x="1.5" y="11.5" width="3.5" height="3.5" fill="#fff"/><rect x="6.5" y="11.5" width="3.5" height="3.5" fill="#fff"/><rect x="11.5" y="11.5" width="3.5" height="3.5" fill="#fff"/></svg>
<div class="k a" style="left:917px;top:508px;width:200px;text-align:right;font-size:12px;line-height:12px;white-space:nowrap;color:#000">左父格<span style="display:inline-block;width:6px;text-align:center;color:#888">:</span></div>
<div class="a" style="left:1124px;top:502px;width:150px;height:20px;background:#fff;border:1px solid #a0a0a0"></div>
<div class="k a" style="left:1131px;top:507px;font-size:12px;line-height:12px;white-space:nowrap;color:#000;">默认</div>
<div class="k a" style="left:917px;top:556px;width:200px;text-align:right;font-size:12px;line-height:12px;white-space:nowrap;color:#000">上父格<span style="display:inline-block;width:6px;text-align:center;color:#888">:</span></div>
<div class="a" style="left:1124px;top:551px;width:150px;height:21px;background:#fff;border:1px solid #a0a0a0"></div>
<div class="k a" style="left:1131px;top:556px;font-size:12px;line-height:12px;white-space:nowrap;color:#000;">默认</div>
<div class="a" style="left:1127px;top:536px;width:150px;height:26px;background:#fff;border:1px solid #a8c8ec"></div>
<svg style="left:1101px;top:531px" width="34" height="32"><g transform="rotate(-12 17 16)"><rect x="3" y="3" width="28" height="26" rx="5" fill="#f05a1a"/><path d="M25 10C22 6 9 7 9 12C9 17 24 14 24 19C24 24 12 25 8 22" stroke="#fff" stroke-width="4" fill="none" stroke-linecap="round"/></g></svg>
<div class="k a" style="left:1139px;top:541px;font-size:14px;line-height:16px;font-weight:bold;color:#1a70d8">英</div>
<svg style="left:1165px;top:543px" width="14" height="14"><circle cx="3" cy="4" r="1.5" fill="#1a70d8"/><path d="M11 8C11 11 10 12 8 13" stroke="#1a70d8" stroke-width="2.2" stroke-linecap="round" fill="none"/><circle cx="10.5" cy="8" r="1.5" fill="#1a70d8"/></svg>
<svg style="left:1189px;top:541px" width="13" height="17"><rect x="3.5" y="0.5" width="6" height="10" rx="3" fill="#1a70d8"/><path d="M1 7C1 11 3.5 13 6.5 13C9.5 13 12 11 12 7M6.5 13V16" stroke="#1a70d8" stroke-width="1.6" fill="none"/><rect x="4" y="15" width="5" height="2" fill="#1a70d8"/></svg>
<svg style="left:1212px;top:543px" width="16" height="12"><rect x="0.8" y="0.8" width="14.4" height="10.4" rx="2" fill="none" stroke="#1a70d8" stroke-width="1.6"/><path d="M3 4H13M3 6.5H13M4 9H12" stroke="#1a70d8" stroke-width="1.3" stroke-dasharray="1.5 1"/></svg>
<svg style="left:1235px;top:537px" width="20" height="20"><defs><linearGradient id="sg" x1="0" y1="0" x2="1" y2="1"><stop offset="0" stop-color="#f26a50"/><stop offset=".6" stop-color="#a06ae8"/><stop offset="1" stop-color="#50a8f8"/></linearGradient></defs><path d="M1 8L5 5H13L17 8L15 11L13 10V18H5V10L3 11Z" fill="url(#sg)"/><circle cx="16" cy="4" r="3" fill="#f05030"/></svg>
<svg style="left:1261px;top:542px" width="6" height="14"><rect x="0" y="0" width="6" height="5" rx="1" fill="#1a70d8"/><rect x="0" y="8" width="6" height="5" rx="1" fill="#1a70d8"/></svg>
<div class="hl" style="left:1064px;top:603px;width:202px;background:#bdb7a0"></div>
<div class="k a" style="left:1064px;top:616px;font-size:12px;line-height:12px;white-space:nowrap;color:#000;">可伸展性<span style="display:inline-block;width:6px;text-align:center;color:#888">:</span></div>
<svg style="left:1128px;top:615px" width="13" height="13"><rect x="0" y="0" width="13" height="13" fill="#3d8ee8"/><path d="M2.5 6.5L5.3 9.5L10.5 3" stroke="#fff" stroke-width="1.6" fill="none"/></svg>
<div class="k a" style="left:1145px;top:616px;font-size:12px;line-height:12px;white-space:nowrap;color:#000;">横向可伸展</div>
<svg style="left:1128px;top:644px" width="13" height="13"><rect x="0" y="0" width="13" height="13" fill="#3d8ee8"/><path d="M2.5 6.5L5.3 9.5L10.5 3" stroke="#fff" stroke-width="1.6" fill="none"/></svg>
<div class="k a" style="left:1145px;top:645px;font-size:12px;line-height:12px;white-space:nowrap;color:#000;">纵向可伸展</div>
</body></html>
